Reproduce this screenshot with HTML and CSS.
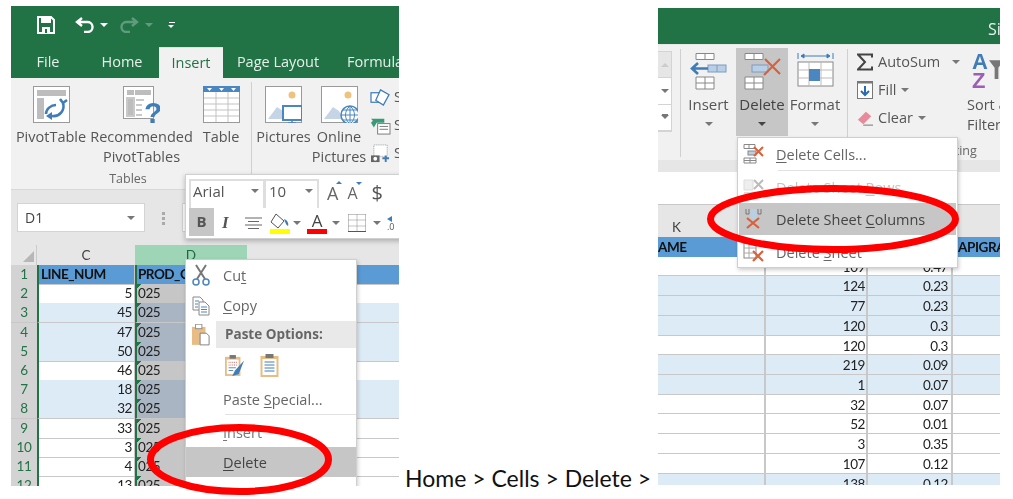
FILE: index.html
```html
<!DOCTYPE html>
<html lang="en">

<head>
  <meta charset="UTF-8">
  <title>Delete a column in Excel</title>
  <link rel="stylesheet" href="styles.css">
</head>

<body>
  <main class="slide">

    <!-- left screenshot: right click on column D -->
    <section class="shot shot-left">
      <div class="title-bar">
        <svg class="qat-save" viewBox="0 0 18 18"><path d="M1 1h13l3 3v13H1z" fill="none" stroke="#fff" stroke-width="2"/><rect x="4" y="2" width="10" height="5" fill="#fff"/><rect x="5" y="11" width="8" height="6" fill="#fff"/><rect x="8" y="13" width="2" height="4" fill="#217346"/></svg>
        <svg class="qat-undo" viewBox="0 0 20 16"><path d="M2 5h10a5 5 0 0 1 1 10H9M7 1L2 5l5 4" fill="none" stroke="#fff" stroke-width="2.4"/></svg>
        <i class="caret white qat-c1"></i>
        <svg class="qat-redo" viewBox="0 0 20 16"><path d="M18 5H8a5 5 0 0 0-1 10h4M13 1l5 4-5 4" fill="none" stroke="#5f9c7d" stroke-width="2.4"/></svg>
        <i class="caret dim qat-c2"></i>
        <span class="qat-more"><i class="bar"></i><i class="caret white"></i></span>
      </div>
      <nav class="tabs">
        <span class="tab tab-file">File</span>
        <span class="tab tab-home">Home</span>
        <span class="tab tab-insert">Insert</span>
        <span class="tab tab-page">Page Layout</span>
        <span class="tab tab-formula">Formula</span>
      </nav>
      <div class="ribbon ribbon-left">
        <div class="group group-tables">
          <div class="group-row">
            <div class="btn w-pivot">
              <svg class="big" viewBox="0 0 37 37"><rect x=".5" y=".5" width="36" height="36" fill="#fff" stroke="#9a9a9a"/><rect x="4" y="4" width="9" height="6" fill="#bdbdbd"/><rect x="13" y="4" width="20" height="6" fill="#bdbdbd"/><rect x="4" y="12" width="7" height="21" fill="#bdbdbd"/><path d="M30 17a10 10 0 0 1-11 13M27 13l3 4 4-3M13 28c0-5 5-9 10-9" fill="none" stroke="#3f7cb8" stroke-width="2.6"/><path d="M13 30l6-4v8z" fill="#3f7cb8"/></svg>
              <span>PivotTable</span>
            </div>
            <div class="btn w-recommended">
              <svg class="big" viewBox="0 0 37 37"><rect x=".5" y=".5" width="30" height="32" fill="#fff" stroke="#9a9a9a"/><rect x="4" y="4" width="7" height="5" fill="#bdbdbd"/><rect x="12" y="4" width="16" height="5" fill="#bdbdbd"/><path d="M4 12h7v18H4zM13 14h8M13 19h6M13 24h6M13 29h6" fill="#bdbdbd" stroke="#c9c9c9" stroke-width="2"/><text x="21" y="37" class="ico-q">?</text></svg>
              <span>Recommended<br>PivotTables</span>
            </div>
            <div class="btn w-table">
              <svg class="big" viewBox="0 0 37 37"><rect x=".5" y=".5" width="36" height="36" fill="#fff" stroke="#9a9a9a"/><path d="M1 12h35M1 18h35M1 24h35M1 30h35M13 6v30M25 6v30" stroke="#c3c3c3"/><rect y="0" width="37" height="6" fill="#4a86c0"/><path d="M4 2h5l-2.500 3zM16 2h5l-2.500 3zM28 2h5l-2.500 3z" fill="#fff"/></svg>
              <span>Table</span>
            </div>
          </div>
          <div class="group-label">Tables</div>
        </div>
        <i class="sep sep-left"></i>
        <div class="btn w-pictures">
          <svg class="big" viewBox="0 0 37 37"><rect x=".5" y=".5" width="36" height="36" fill="#fff" stroke="#9a9a9a"/><circle cx="27" cy="9" r="3.500" fill="#eec27f"/><path d="M3 33l9-12 6 4 4 8z" fill="#c5d5e6"/><rect x="18" y="20" width="19" height="14" fill="#fff" stroke="#4a86c0" stroke-width="2"/><path d="M27 34v3M23 37h8" stroke="#4a86c0" stroke-width="1.500"/></svg>
          <span>Pictures</span>
        </div>
        <div class="btn w-online">
          <svg class="big" viewBox="0 0 37 37"><rect x=".5" y=".5" width="36" height="36" fill="#fff" stroke="#9a9a9a"/><circle cx="27" cy="9" r="3.500" fill="#eec27f"/><path d="M3 33l9-12 6 4 4 8z" fill="#c5d5e6"/><circle cx="29" cy="29" r="9" fill="#fff" stroke="#4a86c0" stroke-width="1.500"/><path d="M20 29h18M29 20v18M22 24h14M22 34h14M29 20c-6 5-6 13 0 18M29 20c6 5 6 13 0 18" fill="none" stroke="#4a86c0"/></svg>
          <span>Online<br>Pictures</span>
        </div>
        <div class="small-icons">
          <div class="small-row"><svg viewBox="0 0 22 20"><rect x="1" y="5" width="11" height="10" fill="#fff" stroke="#3f7cb8" stroke-width="1.300"/><path d="M11 2l9 5-6 11-8-5z" fill="#fff" stroke="#3f7cb8" stroke-width="1.300"/></svg><span>S</span></div>
          <div class="small-row"><svg viewBox="0 0 22 20"><path d="M1 3h14v4H7l-3 5-3-5 2-2z" fill="#3a9a77"/><rect x="8" y="8" width="13" height="11" fill="#fff" stroke="#777"/><path d="M10 11h9M10 14h9" stroke="#777"/></svg><span>S</span></div>
          <div class="small-row"><svg viewBox="0 0 22 20"><rect x="4" y="1" width="14" height="12" fill="#fff" stroke="#999" stroke-dasharray="1 1"/><rect x="1" y="12" width="9" height="7" fill="#666"/><circle cx="5.500" cy="15.500" r="2" fill="#fff"/><path d="M13 15h7M16.500 12v7" stroke="#3f7cb8" stroke-width="2"/></svg><span>S</span></div>
        </div>
      </div>
      <div class="formula-band">
        <div class="name-box">D1<i class="caret gray"></i></div>
        <span class="grip"><i></i><i></i><i></i></span>
        <div class="formula-box"></div>
      </div>
      <div class="col-head col-left">
        <span class="corner"><i></i></span>
        <span class="ch">C</span>
        <span class="ch ch-sel">D</span>
        <span></span>
      </div>
      <div class="sheet sheet-left">
        <div class="row row-head"><b>1</b><span class="c hd">LINE_NUM</span><span class="d hd">PROD_CD</span><span></span></div>
        <div class="row"><b>2</b><span class="c">5</span><span class="d">025</span><span></span></div>
        <div class="row band"><b>3</b><span class="c">45</span><span class="d">025</span><span></span></div>
        <div class="row band"><b>4</b><span class="c">47</span><span class="d">025</span><span></span></div>
        <div class="row band"><b>5</b><span class="c">50</span><span class="d">025</span><span></span></div>
        <div class="row"><b>6</b><span class="c">46</span><span class="d">025</span><span></span></div>
        <div class="row band"><b>7</b><span class="c">18</span><span class="d">025</span><span></span></div>
        <div class="row band"><b>8</b><span class="c">32</span><span class="d">025</span><span></span></div>
        <div class="row"><b>9</b><span class="c">33</span><span class="d">025</span><span></span></div>
        <div class="row"><b>10</b><span class="c">3</span><span class="d">025</span><span></span></div>
        <div class="row"><b>11</b><span class="c">4</span><span class="d">025</span><span></span></div>
        <div class="row"><b>12</b><span class="c">13</span><span class="d">025</span><span></span></div>
      </div>

      <div class="mini-bar">
        <div class="mini-row">
          <div class="mini-box box-font">Arial<i class="caret gray"></i></div>
          <div class="mini-box box-size">10<i class="caret gray"></i></div>
          <span class="mini-a">A<i class="tip up"></i></span>
          <span class="mini-a small">A<i class="tip down"></i></span>
          <span class="mini-dollar">$</span>
        </div>
        <div class="mini-row">
          <span class="mini-b">B</span>
          <span class="mini-i">I</span>
          <svg class="mini-align" viewBox="0 0 17 12"><path d="M0 1h17M3 4.500h11M0 8h17M3 11.500h11" stroke="#666"/></svg>
          <svg class="mini-fill" viewBox="0 0 20 21"><path d="M6 1l8 7-6 7-7-6z" fill="#fff" stroke="#555"/><path d="M14 6c3 1 5 4 4 7-2-1-3-4-4-7z" fill="#3f7cb8"/><rect y="16" width="20" height="5" fill="#ff0"/></svg>
          <i class="caret gray c-fill"></i>
          <span class="mini-color">A</span>
          <i class="caret gray c-color"></i>
          <svg class="mini-border" viewBox="0 0 18 18"><path d="M.5.500h17M.5 6h17M.5 12h17M.5.500v17M9 .500v17M17.500.500v17" fill="none" stroke="#888" stroke-dasharray="1 1"/><path d="M0 17.500h18" stroke="#555"/></svg>
          <i class="caret gray c-border"></i>
          <span class="mini-dec"><i class="tip-left"></i>.0</span>
        </div>
      </div>

      <div class="menu menu-context">
        <div class="item item-cut"><span class="item-icon"><svg viewBox="0 0 18 22"><path d="M4 1l9 14M14 1L5 15" stroke="#777" stroke-width="2"/><circle cx="4" cy="18" r="3" fill="none" stroke="#4a86c0" stroke-width="1.500"/><circle cx="14" cy="18" r="3" fill="none" stroke="#4a86c0" stroke-width="1.500"/></svg></span><span class="item-text">Cu<u>t</u></span></div>
        <div class="item"><span class="item-icon"><svg viewBox="0 0 18 20"><path d="M1 1h7l3 3v10H1z" fill="#fff" stroke="#888"/><path d="M7 6h6l4 4v9H7z" fill="#fff" stroke="#888"/><path d="M3 5h4M3 8h3M3 11h3M9 11h6M9 13.500h6M9 16h6" stroke="#4a86c0"/></svg></span><span class="item-text"><u>C</u>opy</span></div>
        <div class="item item-paste"><span class="item-icon"><svg viewBox="0 0 20 24"><rect y="3" width="15" height="20" fill="#e8bd85"/><rect x="4" y="0" width="7" height="5" fill="#fff" stroke="#888"/><path d="M9 10h7l3 3v10H9z" fill="#fff" stroke="#777"/></svg></span><span class="paste-head">Paste Options:</span></div>
        <div class="paste-icons">
          <svg viewBox="0 0 22 23"><rect y="2" width="17" height="21" fill="#e8bd85"/><rect x="2" y="5" width="13" height="16" fill="#fff"/><rect x="5" y="0" width="7" height="4" fill="#777"/><path d="M4 8h9M4 11h9" stroke="#c0504d" stroke-dasharray="1 1"/><path d="M4 14h8M4 17h5" stroke="#4a86c0"/><path d="M21 6L11 17l-3 6 7-2z" fill="#3f7cb8"/></svg>
          <svg viewBox="0 0 19 23"><rect y="2" width="18" height="21" fill="#e8bd85"/><rect x="2" y="5" width="14" height="16" fill="#fff"/><rect x="5" y="0" width="8" height="4" fill="#777"/><path d="M4 8h10M4 11h10M4 14h10M4 17h10" stroke="#3f7cb8"/></svg>
        </div>
        <div class="item item-special"><span class="item-icon"></span><span class="item-text">Paste <u>S</u>pecial...</span></div>
        <i class="menu-sep"></i>
        <div class="item item-insert"><span class="item-icon"></span><span class="item-text"><u>I</u>nsert</span></div>
        <div class="item item-delete on"><span class="item-icon"></span><span class="item-text"><u>D</u>elete</span></div>
      </div>
    </section>

    <p class="caption">Home &gt; Cells &gt; Delete &gt;</p>

    <!-- right screenshot: Delete dropdown on the Home tab -->
    <section class="shot shot-right">
      <div class="title-bar title-right"><span>Si</span></div>
      <div class="ribbon ribbon-right">
        <div class="stub"><i class="stub-top"><i class="caret up-dim"></i></i><i><i class="caret gray"></i></i><i><i class="caret gray lined"></i></i></div>
        <i class="sep sep-r1"></i>
        <div class="btn w-insert">
          <svg class="big" viewBox="0 0 37 37"><path d="M6 .500h18v6H6zM15 .500v6M6 24h18v12H6zM6 30h18M15 24v12" fill="#fff" stroke="#888"/><rect x="18" y="12" width="18" height="7" fill="#b9cfe6" stroke="#7d9cbf"/><path d="M27 12v7" stroke="#7d9cbf"/><path d="M18 15.500H3M8 10l-6 5.500L8 21" fill="none" stroke="#3f7cb8" stroke-width="2.600"/></svg>
          <span>Insert</span><i class="caret gray"></i>
        </div>
        <div class="btn w-delete">
          <svg class="big" viewBox="0 0 37 37"><path d="M1 .500h18v6H1zM10 .500v6M1 24h18v12H1zM1 30h18M10 24v12" fill="#fff" stroke="#888"/><rect x="8" y="12" width="16" height="7" fill="#b9cfe6" stroke="#7d9cbf"/><path d="M21 6l15 15M36 6L20 22" stroke="#d8613c" stroke-width="2.200"/></svg>
          <span>Delete</span><i class="caret dark"></i>
        </div>
        <div class="btn w-format">
          <svg class="big big-format" viewBox="0 0 37 37"><path d="M1 0v6M36 0v6M4 3h29M4 3l3-2v4zM33 3l-3-2v4z" fill="#3f7cb8" stroke="#3f7cb8"/><rect x="1" y="9" width="35" height="24" fill="#fff" stroke="#888"/><path d="M1 17h35M1 25h35M12 9v24M24 9v24" stroke="#bbb"/><rect x="12" y="16" width="11" height="12" fill="#4a86c0"/></svg>
          <span>Format</span><i class="caret gray"></i>
        </div>
        <i class="sep sep-r2"></i>
        <div class="edit-stack">
          <div class="edit-row"><svg viewBox="0 0 16 17"><path d="M15 4V1H1l7 7.500L1 16h14v-3" fill="none" stroke="#444" stroke-width="2"/></svg><span>AutoSum</span><i class="caret gray c-auto"></i></div>
          <div class="edit-row"><svg viewBox="0 0 16 18"><rect x=".5" y=".5" width="15" height="17" fill="#fff" stroke="#777"/><path d="M0 1.500h16" stroke="#777" stroke-width="2"/><path d="M8 5v9M4 10l4 4 4-4" fill="none" stroke="#2a6cb0" stroke-width="2"/></svg><span>Fill</span><i class="caret gray"></i></div>
          <div class="edit-row"><svg viewBox="0 0 18 18"><path d="M1 11l9-9 6 5-9 9z" fill="#e98a9b"/><path d="M7 17h11" stroke="#666"/></svg><span>Clear</span><i class="caret gray"></i></div>
        </div>
        <div class="sort-btn">
          <div class="sort-icon"><span class="az-a">A</span><span class="az-z">Z</span><svg viewBox="0 0 16 20"><path d="M0 0h16L10 8v12H6V8z" fill="#777"/></svg></div>
          <span>Sort &amp;<br>Filter</span>
        </div>
        <div class="group-label label-edit">Editing</div>
      </div>
      <div class="band-gray"></div>
      <div class="formula-white"></div>
      <div class="col-head col-right"><span class="ch-k">K</span></div>
      <div class="sheet sheet-right">
        <div class="rrow rrow-head"><span>AME</span><span></span><span class="apig">APIGRA</span></div>
        <div class="rrow"><span></span><span>109</span><span>0.47</span><span></span></div>
        <div class="rrow band"><span></span><span>124</span><span>0.23</span><span></span></div>
        <div class="rrow band"><span></span><span>77</span><span>0.23</span><span></span></div>
        <div class="rrow band"><span></span><span>120</span><span>0.3</span><span></span></div>
        <div class="rrow"><span></span><span>120</span><span>0.3</span><span></span></div>
        <div class="rrow band"><span></span><span>219</span><span>0.09</span><span></span></div>
        <div class="rrow band"><span></span><span>1</span><span>0.07</span><span></span></div>
        <div class="rrow"><span></span><span>32</span><span>0.07</span><span></span></div>
        <div class="rrow"><span></span><span>52</span><span>0.01</span><span></span></div>
        <div class="rrow"><span></span><span>3</span><span>0.35</span><span></span></div>
        <div class="rrow"><span></span><span>107</span><span>0.12</span><span></span></div>
        <div class="rrow band"><span></span><span>138</span><span>0.12</span><span></span></div>
      </div>

      <div class="menu menu-delete">
        <div class="ditem"><span class="ditem-icon"><svg viewBox="0 0 21 20"><path d="M1 .500h11v4H1zM6 .500v4M1 14h12v5H1zM1 16.500h12M7 14v5" fill="#fff" stroke="#888"/><rect x="5" y="7" width="8" height="4" fill="#b9cfe6" stroke="#888"/><path d="M11 3l9 9M20 3l-9 9" stroke="#d8613c" stroke-width="2"/></svg></span><span><u>D</u>elete Cells...</span></div>
        <i class="menu-sep sep-del"></i>
        <div class="ditem off"><span class="ditem-icon"><svg viewBox="0 0 21 20"><path d="M1 3h9v10H1z" fill="#eee" stroke="#ddd"/><path d="M11 3l9 9M20 3l-9 9" stroke="#bbb" stroke-width="2"/><path d="M1 16h12" stroke="#ddd" stroke-width="2"/></svg></span><span>Delete Sheet <u>R</u>ows</span></div>
        <div class="ditem on"><span class="ditem-icon"><svg viewBox="0 0 21 20"><path d="M3 0v5h3V0M15 0v5h3V0" fill="none" stroke="#777"/><rect x="7.500" y="0" width="6" height="10" fill="#b9cfe6"/><path d="M4 9l12 10M16 9L4 19" stroke="#d8613c" stroke-width="2.200"/></svg></span><span>Delete Sheet <u>C</u>olumns</span></div>
        <div class="ditem last"><span class="ditem-icon"><svg viewBox="0 0 21 20"><rect x="1" y="1" width="12" height="15" fill="#fff" stroke="#888"/><path d="M1 6h12M1 11h12M6 1v15" stroke="#aaa"/><path d="M10 9l10 10M20 9L10 19" stroke="#d8613c" stroke-width="2.200"/></svg></span><span>Delete <u>S</u>heet</span></div>
      </div>
    </section>

    <!-- red hand drawn rings go over both screenshots -->
    <svg class="ring ring-left" viewBox="0 0 185 71"><ellipse cx="92.500" cy="35.500" rx="89" ry="32" fill="none" stroke="#f00" stroke-width="7"/></svg>
    <svg class="ring ring-right" viewBox="0 0 252 68"><ellipse cx="126" cy="34" rx="122.500" ry="30.500" fill="none" stroke="#f00" stroke-width="7"/></svg>
  </main>
</body>

</html>
```

FILE: styles.css
```css
* {
  box-sizing: border-box;
  margin: 0;
  padding: 0
}

:root {
  --green: #217346;
  --ribbon: #f1f1f1;
  --band: #e6e6e6;
  --blue: #5b9bd5;
  --row-blue: #ddebf7;
  --line: #c8c8c8;
  --text: #444;
  --hover: #c6c6c6
}

body {
  background: #fff;
  font-family: "Open Sans", "Noto Sans", sans-serif;
  color: var(--text);
  overflow: hidden
}

i {
  font-style: normal
}

.slide {
  position: relative;
  display: flex;
  align-items: flex-start;
  width: 1013px;
  height: 499px;
  padding: 6px 13px 0 11px;
  overflow: hidden
}

.shot {
  position: relative;
  flex: none;
  overflow: hidden;
  display: flex;
  flex-direction: column;
  background: #fff;
  filter: blur(.35px)
}

.shot-left {
  width: 388px;
  height: 480px
}

.shot-right {
  width: 342px;
  height: 477px;
  margin-top: 2px
}

.caption {
  flex: none;
  width: 253px;
  margin-left: 6px;
  align-self: flex-end;
  margin-bottom: 6px;
  font: 23px/30px Lato, sans-serif;
  color: #111;
  white-space: nowrap
}

.ring {
  position: absolute
}

.ring-left {
  left: 147px;
  top: 424px;
  width: 185px;
  height: 71px
}

.ring-right {
  left: 707px;
  top: 185px;
  width: 252px;
  height: 68px
}

/* carets */
.caret {
  display: inline-block;
  flex: none;
  width: 0;
  height: 0;
  border-left: 4px solid transparent;
  border-right: 4px solid transparent;
  border-top: 4px solid #777
}

.caret.white {
  border-top-color: #fff
}

.caret.dim {
  border-top-color: #5f9c7d
}

.caret.dark {
  border-top-color: #444
}

/* title bar */
.title-bar {
  flex: none;
  height: 41px;
  background: var(--green);
  display: flex;
  align-items: center;
  padding-bottom: 3px
}

.qat-save {
  width: 18px;
  height: 18px;
  margin-left: 26px
}

.qat-undo,
.qat-redo {
  width: 20px;
  height: 16px
}

.qat-undo {
  margin-left: 20px
}

.qat-c1 {
  margin-left: 5px
}

.qat-redo {
  margin-left: 11px
}

.qat-c2 {
  margin-left: 6px
}

.qat-more {
  display: flex;
  flex-direction: column;
  gap: 2px;
  margin-left: 15px
}

.qat-more .bar {
  width: 6px;
  height: 1px;
  margin-left: 1px;
  background: #fff
}

.qat-more .caret {
  border-width: 3px 3.500px 0
}

.title-right {
  height: 37px;
  padding: 5px 0 0 330px;
  color: #e8f1ec;
  font-size: 16px;
  border-bottom: 1px solid #e8e8e8;
  overflow: hidden
}

/* tabs */
.tabs {
  flex: none;
  height: 31px;
  background: var(--green);
  display: flex;
  font-size: 14.500px;
  color: #e6f0ea;
  white-space: nowrap
}

.tab {
  flex: none;
  display: flex;
  align-items: center;
  justify-content: center;
  padding-bottom: 2px
}

.tab-file {
  width: 74px
}

.tab-home {
  width: 74px
}

.tab-insert {
  width: 64px;
  background: var(--ribbon);
  color: var(--green);
  border-top: 1px solid #d8e4dd
}

.tab-page {
  width: 110px
}

.tab-formula {
  margin-left: 14px;
  justify-content: flex-start
}

/* ribbon */
.ribbon {
  flex: none;
  background: var(--ribbon);
  display: flex;
  font-size: 14.500px;
  line-height: 20px;
  color: #555
}

.ribbon-left {
  height: 112px;
  padding: 8px 0 0 6px;
  border-bottom: 1px solid #d8d8d8
}

.group {
  display: flex;
  flex-direction: column
}

.group-row {
  display: flex;
  height: 89px
}

.group-label {
  font-size: 12.500px;
  line-height: 20px;
  color: #666;
  text-align: center
}

.btn {
  flex: none;
  display: flex;
  flex-direction: column;
  align-items: center;
  text-align: center;
  white-space: nowrap
}

.big {
  flex: none;
  width: 37px;
  height: 37px;
  margin-bottom: 4px
}

.ico-q {
  font: bold 30px "Liberation Sans", sans-serif;
  fill: #3f7cb8
}

.w-pivot {
  width: 68px
}

.w-recommended {
  width: 101px;
  margin-left: 6px
}

.w-table {
  width: 36px;
  margin-left: 11px
}

.sep {
  flex: none;
  width: 1px;
  background: #d0d0d0
}

.sep-left {
  height: 93px;
  margin: -4px 6px 0 12px
}

.w-pictures {
  width: 51px
}

.w-online {
  width: 50px;
  margin-left: 5px
}

.small-icons {
  display: flex;
  flex-direction: column;
  gap: 6px;
  margin-left: 6px
}

.small-row {
  display: flex;
  align-items: center;
  gap: 3px;
  height: 22px
}

.small-row svg {
  width: 21px;
  height: 19px
}

/* formula bar */
.formula-band {
  flex: none;
  height: 55px;
  background: var(--band);
  display: flex;
  align-items: flex-start;
  padding: 13px 0 0 6px
}

.name-box {
  width: 128px;
  height: 29px;
  background: #fff;
  border: 1px solid #d4d4d4;
  display: flex;
  align-items: center;
  justify-content: space-between;
  padding: 0 9px 0 7px;
  font-size: 14px;
  color: #444
}

.grip {
  display: flex;
  flex-direction: column;
  gap: 2px;
  margin: 9px 0 0 17px
}

.grip i {
  width: 3px;
  height: 3px;
  background: #aaa
}

.formula-box {
  width: 40px;
  height: 29px;
  margin-left: 17px;
  background: #fff;
  border: 1px solid #d4d4d4
}

/* column headers */
.col-head {
  flex: none;
  background: var(--band);
  font: 13.500px/20px Lato, sans-serif;
  color: #444
}

.col-left {
  height: 20px;
  display: grid;
  grid-template-columns: 26px 98px 112px 1fr
}

.corner {
  display: flex;
  align-items: flex-end;
  justify-content: flex-end;
  padding: 0 2px 3px 0;
  border-right: 1px solid #ccc
}

.corner i {
  width: 0;
  height: 0;
  border-left: 11px solid transparent;
  border-bottom: 11px solid #b7b7b7
}

.ch {
  text-align: center
}

.ch-sel {
  background: #9fd5b7;
  color: #1d6a40
}

.col-right {
  height: 33px;
  border-top: 1px solid var(--line);
  padding: 13px 0 0 14px;
  line-height: 19px
}

/* left sheet */
.sheet {
  flex: 1;
  font: 13.500px/19px Lato, sans-serif;
  letter-spacing: -.4px;
  color: #222;
  overflow: hidden
}

.row {
  display: grid;
  grid-template-columns: 26px 98px 112px 1fr;
  height: 19.200px
}

.row>* {
  border-bottom: 1px solid var(--line)
}

.row b {
  font-weight: 400;
  text-align: center;
  background: #d3d3d3;
  color: #217346
}

.row .c {
  text-align: right;
  padding-right: 2px;
  border-left: 2px solid var(--green);
  border-right: 1px solid var(--line)
}

.row .d {
  padding-left: 1px;
  background: linear-gradient(135deg, var(--green) 3px, transparent 3px), #c6c6c6;
  border-left: 2px solid var(--green)
}

.row.band span:last-child,
.row.band .c {
  background: var(--row-blue)
}

.row.band .d {
  background: linear-gradient(135deg, var(--green) 3px, transparent 3px), #a9b5c3
}

.row-head span:last-child,
.row .c.hd,
.row .d.hd {
  background: var(--blue);
  font-weight: 700;
  color: #111;
  text-align: left;
  letter-spacing: -.5px
}

.row .c.hd {
  padding-left: 2px
}

/* floating toolbar */
.mini-bar {
  position: absolute;
  left: 174px;
  top: 168px;
  width: 240px;
  height: 65px;
  background: #fff;
  border: 1px solid #d0d0d0;
  box-shadow: 0 2px 5px rgba(0, 0, 0, .25);
  padding: 3px 0 0 3px;
  font-size: 14.500px
}

.mini-row {
  display: flex;
  align-items: center;
  height: 30px;
  white-space: nowrap
}

.mini-box {
  height: 29px;
  display: flex;
  align-items: center;
  justify-content: space-between;
  border: 2px solid #dedede;
  border-bottom: 0;
  padding: 0 4px 6px 2px;
  font-size: 15px;
  color: #555
}

.box-font {
  width: 76px
}

.box-size {
  width: 55px;
  margin-left: -1px;
  padding-left: 3px
}

.mini-a {
  display: flex;
  margin-left: 8px;
  font-size: 18px;
  color: #666
}

.mini-a.small {
  margin-left: 5px;
  font-size: 16px
}

.tip {
  width: 0;
  height: 0;
  margin-left: -2px;
  border-left: 3px solid transparent;
  border-right: 3px solid transparent
}

.tip.up {
  border-bottom: 3px solid #3f7cb8
}

.tip.down {
  border-top: 3px solid #3f7cb8
}

.mini-dollar {
  margin-left: 10px;
  font-size: 20px;
  line-height: 26px;
  color: #555
}

.mini-b {
  width: 25px;
  height: 28px;
  margin-bottom: 2px;
  background: var(--hover);
  text-align: center;
  font-weight: 700;
  font-size: 15px;
  line-height: 27px;
  color: #555
}

.mini-i {
  width: 12px;
  margin-left: 8px;
  font: italic 700 17px "Liberation Serif", serif;
  color: #555
}

.mini-align {
  width: 17px;
  height: 12px;
  margin-left: 11px
}

.mini-fill {
  width: 20px;
  height: 21px;
  margin-left: 8px
}

.c-fill {
  margin-left: 3px;
  border-top-color: #777
}

.mini-color {
  width: 20px;
  height: 22px;
  margin-left: 6px;
  border-bottom: 5px solid #f00;
  text-align: center;
  font-size: 17px;
  line-height: 17px;
  color: #444
}

.c-color {
  margin-left: 5px
}

.mini-border {
  width: 18px;
  height: 18px;
  margin-left: 8px
}

.c-border {
  margin-left: 7px
}

.mini-dec {
  display: flex;
  flex-direction: column;
  margin-left: 6px;
  font-size: 9px;
  line-height: 9px;
  color: #555
}

.tip-left {
  width: 0;
  height: 0;
  border-top: 3px solid transparent;
  border-bottom: 3px solid transparent;
  border-right: 5px solid #3f7cb8
}

/* menus */
.menu {
  position: absolute;
  background: #fff;
  border: 1px solid #cfcfcf;
  box-shadow: 1px 2px 4px rgba(0, 0, 0, .2);
  font-size: 14.500px;
  color: #666;
  white-space: nowrap
}

.menu u {
  text-underline-offset: 2px
}

.menu-context {
  left: 174px;
  top: 253px;
  width: 172px;
  height: 250px
}

.item {
  display: flex;
  align-items: center;
  height: 31px
}

.item-cut {
  height: 30px
}

.item-icon {
  flex: none;
  width: 30px;
  display: flex;
  justify-content: center
}

.item-icon svg {
  width: 18px;
  height: 22px
}

.item-text {
  margin-left: 7px
}

.item-paste {
  height: 27px
}

.paste-head {
  flex: 1;
  height: 27px;
  background: #e9e9e9;
  padding-left: 9px;
  font-weight: 700;
  font-size: 13.500px;
  line-height: 27px;
  color: #666
}

.paste-icons {
  display: flex;
  gap: 15px;
  height: 36px;
  padding: 6px 0 0 39px
}

.paste-icons svg {
  height: 23px;
  width: 20px
}

.item-special {
  height: 30px
}

.menu-sep {
  display: block;
  height: 1px;
  margin-left: 39px;
  background: #e2e2e2
}

.item-insert {
  height: 30px;
  margin-top: 2px;
  color: #777
}

.on {
  background: var(--hover);
  color: #444
}

.item-delete {
  height: 30px
}

/* right ribbon */
.ribbon-right {
  position: relative;
  height: 115px;
  padding-top: 3px
}

.stub {
  flex: none;
  width: 14px;
  height: 81px;
  margin-top: 3px;
  display: flex;
  flex-direction: column;
  border: 1px solid #d4d4d4;
  border-left: 0;
  background: #fff
}

.stub>i {
  flex: 1;
  display: flex;
  align-items: center;
  justify-content: center;
  border-bottom: 1px solid #d4d4d4
}

.stub .stub-top {
  background: var(--band)
}

.stub .up-dim {
  border-top: 0;
  border-bottom: 4px solid #ccc
}

.stub .lined {
  box-shadow: 0 -2px 0 -1px #777
}

.sep-r1 {
  height: 108px;
  margin: 1px 0 0 8px
}

.ribbon-right .btn {
  height: 88px;
  padding-top: 5px;
  font-size: 15px
}

.ribbon-right .btn .caret {
  margin-top: 8px
}

.w-insert {
  width: 55px
}

.w-delete {
  width: 52px;
  background: var(--hover);
  color: #444
}

.w-format {
  width: 50px;
  margin-left: 2px
}

.sep-r2 {
  height: 108px;
  margin: 1px 0 0 7px
}

.edit-stack {
  flex: none;
  width: 110px;
  margin-left: 9px;
  display: flex;
  flex-direction: column
}

.edit-row {
  display: flex;
  align-items: center;
  gap: 5px;
  height: 28px
}

.edit-row svg {
  flex: none;
  width: 16px;
  height: 18px
}

.c-auto {
  margin-left: 7px
}

.sort-btn {
  width: 32px;
  white-space: nowrap;
  padding-top: 4px
}

.sort-icon {
  position: relative;
  display: flex;
  flex-direction: column;
  width: 32px;
  height: 43px;
  margin-left: 5px;
  font: 700 22px/19px "Liberation Sans", sans-serif
}

.az-a {
  color: #3f7cb8
}

.az-z {
  color: #9c5fb5
}

.sort-icon svg {
  position: absolute;
  left: 17px;
  top: 8px;
  width: 15px;
  height: 19px
}

.label-edit {
  position: absolute;
  left: 279px;
  top: 96px
}

.band-gray {
  flex: none;
  height: 12px;
  background: var(--band)
}

.formula-white {
  flex: none;
  height: 32px;
  background: #fff
}

/* right sheet */
.rrow {
  display: grid;
  grid-template-columns: 108px 102px 85px 1fr;
  height: 19.730px;
  line-height: 20px;
  border-bottom: 1px solid var(--line);
  text-align: right
}

.rrow span {
  padding-right: 3px;
  border-right: 2px solid var(--line)
}

.rrow span:nth-child(2) {
  padding-right: 1px
}

.rrow span:last-child {
  border-right: 0
}

.rrow.band {
  background: var(--row-blue)
}

.rrow-head {
  background: var(--blue);
  font-weight: 700;
  color: #111;
  text-align: left;
  border: 0
}

.rrow-head span {
  border: 0;
  padding: 0
}

.rrow-head .apig {
  grid-column: 3 / 5;
  margin-left: 90px;
  overflow: hidden
}

/* delete dropdown */
.menu-delete {
  left: 79px;
  top: 129px;
  width: 221px;
  height: 131px
}

.ditem {
  display: flex;
  align-items: center;
  height: 32px
}

.ditem-icon {
  flex: none;
  width: 38px;
  padding-left: 5px
}

.ditem-icon svg {
  display: block;
  width: 21px;
  height: 20px
}

.sep-del {
  margin-left: 40px
}

.ditem.off {
  color: #c4c4c4
}

.ditem.on {
  margin: 0 1px
}

.ditem.on .ditem-icon {
  width: 37px;
  padding-left: 4px
}

.ditem.last {
  height: 34px
}
```
